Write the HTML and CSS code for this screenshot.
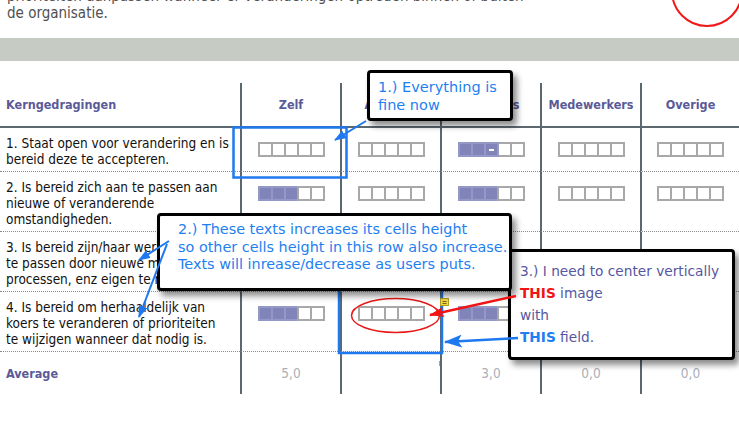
FILE: index.html
```html
<!DOCTYPE html>
<html lang="nl">
  <head>
    <meta charset="UTF-8" />
    <meta name="viewport" content="width=device-width, initial-scale=1.0" />
    <title>Kerngedragingen</title>
    <link rel="stylesheet" href="styles.css">
  </head>
  <body>
    <p class="intro">
      prioriteiten aanpassen wanneer er veranderingen optreden binnen of buiten de organisatie.
    </p>
    <div class="band"></div>

    <table class="ratings">
      <colgroup>
        <col class="c-item" />
        <col class="c-src" />
        <col class="c-src" />
        <col class="c-src" />
        <col class="c-src" />
        <col class="c-last" />
      </colgroup>
      <thead>
        <tr>
          <th class="item">Kerngedragingen</th>
          <th>Zelf</th>
          <th>Afdeling</th>
          <th>Collega's</th>
          <th>Medewerkers</th>
          <th>Overige</th>
        </tr>
      </thead>
      <tbody>
        <tr>
          <td class="item">1. Staat open voor verandering en is bereid deze te accepteren.</td>
          <td><span class="scale"><i></i><i></i><i></i><i></i><i></i></span></td>
          <td><span class="scale"><i></i><i></i><i></i><i></i><i></i></span></td>
          <td><span class="scale"><i class="on"></i><i class="on"></i><i class="on dash"></i><i></i><i></i></span></td>
          <td><span class="scale"><i></i><i></i><i></i><i></i><i></i></span></td>
          <td><span class="scale"><i></i><i></i><i></i><i></i><i></i></span></td>
        </tr>
        <tr>
          <td class="item">2. Is bereid zich aan te passen aan nieuwe of veranderende omstandigheden.</td>
          <td><span class="scale"><i class="on"></i><i class="on"></i><i class="on"></i><i></i><i></i></span></td>
          <td><span class="scale"><i></i><i></i><i></i><i></i><i></i></span></td>
          <td><span class="scale"><i class="on"></i><i class="on"></i><i class="on"></i><i></i><i></i></span></td>
          <td><span class="scale"><i></i><i></i><i></i><i></i><i></i></span></td>
          <td><span class="scale"><i></i><i></i><i></i><i></i><i></i></span></td>
        </tr>
        <tr>
          <td class="item">3. Is bereid zijn/haar werkwijze aan te passen door nieuwe methoden, processen, enz eigen te maken.</td>
          <td><span class="scale"><i class="on"></i><i class="on"></i><i class="on"></i><i></i><i></i></span></td>
          <td><span class="scale"><i></i><i></i><i></i><i></i><i></i></span></td>
          <td></td>
          <td></td>
          <td></td>
        </tr>
        <tr>
          <td class="item">4. Is bereid om herhaaldelijk van koers te veranderen of prioriteiten te wijzigen wanneer dat nodig is.</td>
          <td><span class="scale"><i class="on"></i><i class="on"></i><i class="on"></i><i></i><i></i></span></td>
          <td><span class="scale"><i></i><i></i><i></i><i></i><i></i></span></td>
          <td><span class="scale"><i class="on"></i><i class="on"></i><i class="on"></i><i></i><i></i></span></td>
          <td><span class="scale"><i></i><i></i><i></i><i></i><i></i></span></td>
          <td><span class="scale"><i></i><i></i><i></i><i></i><i></i></span></td>
        </tr>
      </tbody>
      <tfoot>
        <tr>
          <td class="item">Average</td>
          <td>5,0</td>
          <td></td>
          <td>3,0</td>
          <td>0,0</td>
          <td>0,0</td>
        </tr>
      </tfoot>
    </table>

    <!-- annotation marks under the notes -->
    <svg class="marks" width="739" height="431" viewBox="0 0 739 431">
      <circle cx="707" cy="-9" r="35" fill="none" stroke="#f01818" stroke-width="2" />
      <rect x="233.5" y="127.5" width="113" height="50" fill="none" stroke="#1e78f0" stroke-width="2.5" />
      <rect x="339" y="262" width="103" height="91" fill="none" stroke="#1e78f0" stroke-width="2.5" />
      <ellipse cx="395.5" cy="315.5" rx="44" ry="17" fill="none" stroke="#e81818" stroke-width="1.5" />
      <rect x="440.5" y="298.5" width="8" height="7" fill="#eed84a" stroke="#b49c1c" />
      <path d="M442.5 301.5h4M442.5 303.5h4" stroke="#7a6410" />
      <path d="M439.5 361v5" stroke="#e0a030" />
    </svg>

    <div class="note note-3">
      3.) I need to center vertically<br />
      <b class="red">THIS</b> image<br />
      with<br />
      <b class="blue">THIS</b> field.
    </div>
    <div class="note note-2">
      2.) These texts increases its cells height<br />
      so other cells height in this row also increase.<br />
      Texts will inrease/decrease as users puts.
    </div>
    <div class="note note-1">1.) Everything is fine now</div>

    <!-- arrows on top of everything -->
    <svg class="arrows" width="739" height="431" viewBox="0 0 739 431">
      <defs>
        <marker id="headBlue" markerUnits="userSpaceOnUse" markerWidth="12" markerHeight="9" refX="11" refY="4.5" orient="auto">
          <path d="M0 0L12 4.5L0 9z" fill="#1e78f0" />
        </marker>
        <marker id="headBig" markerUnits="userSpaceOnUse" markerWidth="18" markerHeight="13" refX="17" refY="6.5" orient="auto">
          <path d="M0 0L18 6.5L0 13L4 6.5z" fill="#1e78f0" />
        </marker>
        <marker id="headRed" markerUnits="userSpaceOnUse" markerWidth="15" markerHeight="10" refX="14" refY="5" orient="auto">
          <path d="M0 0L15 5L0 10L3 5z" fill="#f01414" />
        </marker>
      </defs>
      <line x1="366" y1="121" x2="335" y2="140" stroke="#1e78f0" stroke-width="2" marker-end="url(#headBlue)" />
      <line x1="169" y1="241" x2="139" y2="260" stroke="#1e78f0" stroke-width="2" marker-end="url(#headBlue)" />
      <line x1="167" y1="244" x2="139" y2="317" stroke="#1e78f0" stroke-width="2" marker-end="url(#headBlue)" />
      <line x1="516" y1="296" x2="430" y2="315" stroke="#f01414" stroke-width="2.5" marker-end="url(#headRed)" />
      <line x1="518" y1="338" x2="445" y2="342" stroke="#1e78f0" stroke-width="2.5" marker-end="url(#headBig)" />
    </svg>
  </body>
</html>
```

FILE: styles.css
```css
* {
  box-sizing: border-box;
}

html,
body {
  margin: 0;
  padding: 0;
  overflow: hidden;
}

body {
  position: relative;
  width: 739px;
  height: 431px;
  background: #fff;
  font-family: "DejaVu Sans Condensed", "DejaVu Sans", sans-serif;
}

.intro {
  margin: -12px 0 0;
  padding-left: 7px;
  width: 535px;
  font-size: 15px;
  line-height: 17px;
  color: #505050;
}

.band {
  height: 23px;
  margin-top: 16px;
  background: #c6cbc3;
}

.ratings {
  width: 739px;
  margin-top: 22px;
  border-collapse: separate;
  border-spacing: 0;
  table-layout: fixed;
}

.c-item {
  width: 240px;
}

.c-src {
  width: 100px;
}

.c-last {
  width: 99px;
}

.ratings th {
  height: 45px;
  padding: 0;
  border-bottom: 2px solid #5c6870;
  font-size: 12.5px;
  font-weight: bold;
  color: #5b5a98;
  text-align: center;
  vertical-align: middle;
}

.ratings th + th,
.ratings td + td {
  border-left: 2px solid #5c6870;
}

.ratings th.item {
  text-align: left;
  padding-left: 6px;
}

.ratings tbody td {
  padding: 14px 0 0;
  border-bottom: 1px dotted #8a8a8a;
  text-align: center;
  vertical-align: top;
  line-height: 15px;
}

.ratings tbody td.item {
  padding: 7px 9.5px 4px 6px;
  font-size: 13.5px;
  line-height: 16px;
  color: #111;
  text-align: left;
}

.ratings tfoot td {
  height: 42px;
  padding: 0;
  font-size: 13.5px;
  color: #a9b0b8;
  text-align: center;
  vertical-align: middle;
}

.ratings tfoot td.item {
  padding-left: 6px;
  font-size: 12.5px;
  font-weight: bold;
  color: #5b5a98;
  text-align: left;
}

.scale {
  display: inline-flex;
  vertical-align: top;
}

.scale i {
  width: 15px;
  height: 15px;
  border: 2px solid #a8a8a8;
  background: #fff;
}

.scale i + i {
  margin-left: -2px;
}

.scale i.on {
  background: #8084b8;
  border-color: #9498c6;
}

.scale i.dash {
  position: relative;
}

.scale i.dash::after {
  content: "";
  position: absolute;
  left: 3px;
  right: 3px;
  top: 5px;
  height: 2px;
  background: #fff;
}

.marks,
.arrows {
  position: absolute;
  top: 0;
  left: 0;
  pointer-events: none;
}

.marks {
  z-index: 1;
}

.arrows {
  z-index: 5;
}

.note {
  position: absolute;
  background: #fff;
  border: 3px solid #000;
  border-radius: 4px;
  box-shadow: 4px 5px 6px rgba(0, 0, 0, 0.45);
  font-family: "DejaVu Sans", sans-serif;
  white-space: nowrap;
}

.note-1 {
  z-index: 4;
  left: 367px;
  top: 70px;
  width: 146px;
  height: 51px;
  padding: 6px 0 0 8px;
  font-size: 14.5px;
  line-height: 17.5px;
  color: #1e80f0;
  white-space: normal;
}

.note-2 {
  z-index: 3;
  left: 157px;
  top: 213px;
  width: 355px;
  height: 78px;
  padding: 5px 0 0 18px;
  font-size: 14.4px;
  line-height: 17.5px;
  color: #1e80f0;
}

.note-3 {
  z-index: 2;
  left: 508px;
  top: 249px;
  width: 227px;
  height: 111px;
  padding: 8px 0 0 9px;
  font-size: 13.7px;
  line-height: 22px;
  color: #5557a0;
}

.note b.red {
  color: #f01414;
}

.note b.blue {
  color: #1e80f0;
}
```
